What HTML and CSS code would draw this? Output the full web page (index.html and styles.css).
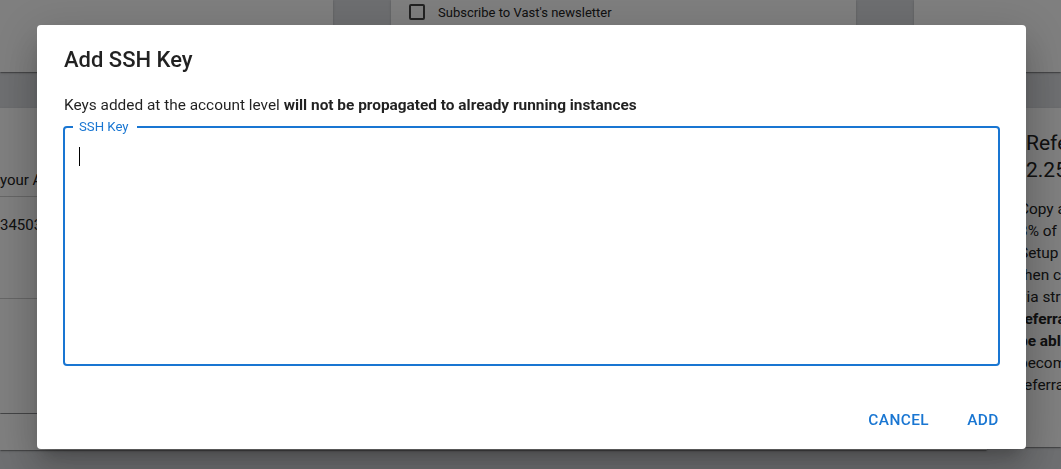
FILE: index.html
```html
<!DOCTYPE html>
<html>
<head>
<meta charset="utf-8">
<link rel="stylesheet" href="styles.css">
</head>
<body>
<div class="page">
  <div class="row-top">
    <div class="card card-a"></div>
    <div class="card card-b">
      <label class="check"><span class="box"></span><span>Subscribe to Vast's newsletter</span></label>
    </div>
    <div class="card card-c"></div>
  </div>
  <div class="row-mid">
    <div class="col-left">
      <div class="card card-d">
        <div class="d-line d-first">your API key for the CLI</div>
        <div class="d-line d-second">345031</div>
      </div>
      <div class="card card-e"></div>
    </div>
    <div class="card card-f">
      <div class="f-title">Referral</div>
      <div class="f-amount">2.25</div>
      <div class="f-body">
        <p>Copy a</p>
        <p>3% of</p>
        <p>Setup</p>
        <p>then c</p>
        <p>via str</p>
        <p class="b">referra</p>
        <p class="b">be abl</p>
        <p>becom</p>
        <p>referra</p>
      </div>
    </div>
  </div>
</div>
<div class="overlay"></div>
<div class="dialog" role="dialog">
  <h2 class="title">Add SSH Key</h2>
  <p class="note">Keys added at the account level <strong>will not be propagated to already running instances</strong></p>
  <fieldset class="field">
    <legend>SSH Key</legend>
    <span class="caret"></span>
  </fieldset>
  <div class="actions">
    <button class="btn">Cancel</button>
    <button class="btn btn-add">Add</button>
  </div>
</div>
</body>
</html>
```

FILE: styles.css
```css
html, body {
  margin: 0;
  padding: 0;
  height: 100%;
  overflow: hidden;
}
body {
  background: #dcdee2;
  font-family: Roboto, "Liberation Sans", sans-serif;
  color: rgba(0,0,0,0.87);
}
.page {
  display: flex;
  flex-direction: column;
  gap: 36px;
  height: 469px;
}
.card {
  background: #fff;
  box-shadow: 0 2px 1px -1px rgba(0,0,0,0.2), 0 1px 1px 0 rgba(0,0,0,0.14), 0 1px 3px 0 rgba(0,0,0,0.12);
}
.row-top {
  display: flex;
  height: 72px;
  gap: 58px;
}
.card-a { width: 333px; flex-shrink: 0; }
.card-b {
  width: 465px;
  flex-shrink: 0;
  padding: 4px 18px;
  box-sizing: border-box;
}
.card-c { flex: 1; }
.check {
  display: flex;
  align-items: center;
  gap: 13px;
  font-size: 13px;
  color: #222;
}
.box {
  width: 12px;
  height: 12px;
  border: 2px solid #444;
  border-radius: 2px;
}
.row-mid {
  display: flex;
  gap: 16px;
  flex: 1;
}
.col-left {
  width: 987px;
  flex-shrink: 0;
  display: flex;
  flex-direction: column;
  gap: 1px;
}
.card-d {
  height: 305px;
  font-size: 15px;
  color: #222;
}
.d-line {
  border-bottom: 1px solid #ccc;
  padding-left: 0;
}
.d-first { padding-top: 62px; padding-bottom: 6px; line-height: 20px; }
.d-second { padding-top: 18px; height: 83px; line-height: 20px; }
.card-e { height: 36px; }
.card-f {
  flex: 1;
  min-width: 0;
  overflow: hidden;
  height: 317px;
  padding: 22px 0 0 16px;
  color: #222;
}
.f-title, .f-amount {
  font-size: 21px;
  line-height: 27px;
  white-space: nowrap;
  margin-left: 7px;
}
.f-body { margin-top: 14px; font-size: 15.4px; line-height: 22px; }
.f-body p { margin: 0; white-space: nowrap; }
.f-body .b { font-weight: 700; }

.overlay {
  position: fixed;
  inset: 0;
  background: rgba(0,0,0,0.5);
}
.dialog {
  position: fixed;
  left: 37px;
  top: 25px;
  width: 989px;
  height: 424px;
  box-sizing: border-box;
  background: #fff;
  border-radius: 4px;
  box-shadow: 0 11px 15px -7px rgba(0,0,0,0.2), 0 24px 38px 3px rgba(0,0,0,0.14), 0 9px 46px 8px rgba(0,0,0,0.12);
  padding: 0 26px;
  display: flex;
  flex-direction: column;
}
.title {
  margin: 0;
  padding-top: 19px;
  font-size: 22px;
  font-weight: 500;
  line-height: 32px;
  color: rgba(0,0,0,0.87);
  padding-left: 1px;
}
.note {
  margin: 19px 0 0;
  font-size: 15.4px;
  line-height: 20px;
  padding-left: 1px;
}
.note strong { font-weight: 700; }
.field {
  margin: 5px 0 0;
  height: 246px;
  box-sizing: border-box;
  border: 2px solid #1976d2;
  border-radius: 4px;
  padding: 13px 14px 0 8px;
  min-width: 0;
}
.field legend {
  font-size: 13.2px;
  line-height: 14px;
  color: #1976d2;
  padding: 0 8px 0 6px;
  margin-left: 0;
}
.caret {
  display: block;
  width: 1px;
  height: 19px;
  background: #000;
  margin-left: 6px;
}
.actions {
  margin-top: auto;
  display: flex;
  justify-content: flex-end;
  gap: 14px;
  padding-bottom: 11px;
  margin-right: -15px;
}
.btn {
  font-family: Roboto, "Liberation Sans", sans-serif;
  font-size: 15.4px;
  font-weight: 500;
  letter-spacing: 0.4px;
  text-transform: uppercase;
  color: #1976d2;
  background: none;
  border: 0;
  padding: 6px 8px;
  min-width: 64px;
  line-height: 24px;
  cursor: pointer;
}
```
